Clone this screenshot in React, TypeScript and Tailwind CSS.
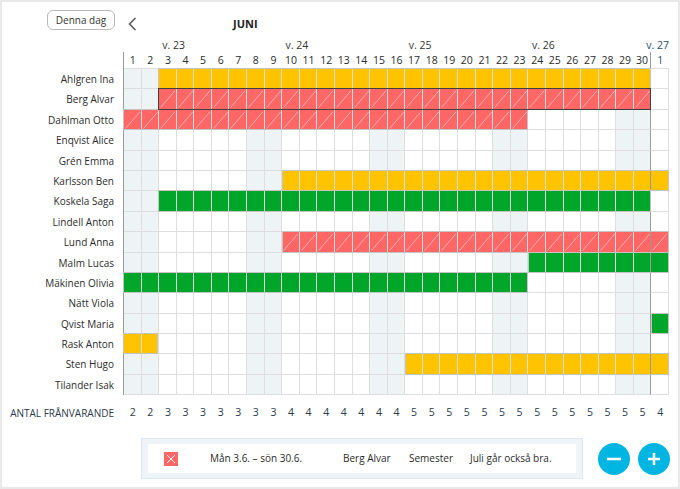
import clsx from "clsx";

type Kind = "yellow" | "red" | "green";

type Bar = {
  from: number;
  to: number;
  kind: Kind;
  selected?: boolean;
};

type Person = {
  name: string;
  bar?: Bar;
};

const COLS = 31;
const COL_W = 546 / COLS;

const days = [...Array.from({ length: 30 }, (_, i) => i + 1), 1];
const weekend = new Set([0, 1, 7, 8, 14, 15, 21, 22, 28, 29]);

const weeks = [
  { label: "v. 23", col: 2 },
  { label: "v. 24", col: 9 },
  { label: "v. 25", col: 16 },
  { label: "v. 26", col: 23 },
];

const people: Person[] = [
  { name: "Ahlgren Ina", bar: { from: 2, to: 29, kind: "yellow" } },
  { name: "Berg Alvar", bar: { from: 2, to: 29, kind: "red", selected: true } },
  { name: "Dahlman Otto", bar: { from: 0, to: 22, kind: "red" } },
  { name: "Enqvist Alice" },
  { name: "Grén Emma" },
  { name: "Karlsson Ben", bar: { from: 9, to: 30, kind: "yellow" } },
  { name: "Koskela Saga", bar: { from: 2, to: 29, kind: "green" } },
  { name: "Lindell Anton" },
  { name: "Lund Anna", bar: { from: 9, to: 30, kind: "red" } },
  { name: "Malm Lucas", bar: { from: 23, to: 30, kind: "green" } },
  { name: "Mäkinen Olivia", bar: { from: 0, to: 22, kind: "green" } },
  { name: "Nätt Viola" },
  { name: "Qvist Maria", bar: { from: 30, to: 30, kind: "green" } },
  { name: "Rask Anton", bar: { from: 0, to: 1, kind: "yellow" } },
  { name: "Sten Hugo", bar: { from: 16, to: 30, kind: "yellow" } },
  { name: "Tilander Isak" },
];

const counts = [
  2, 2, 3, 3, 3, 3, 3, 3, 3, 4, 4, 4, 4, 4, 4, 4, 5, 5, 5, 5, 5, 5, 5, 5, 5, 5, 5, 5, 5, 5, 4,
];

const fill: Record<Kind, string> = {
  yellow: "bg-[#ffc300]",
  red: "bg-[#ff6666]",
  green: "bg-[#00a629]",
};

function Row({ person }: { person: Person }) {
  const bar = person.bar;
  return (
    <div className="flex h-[20.4px]">
      <div className="w-[121px] shrink-0 whitespace-nowrap pr-[9px] text-right leading-[20px] text-[#2b2b2b]">
        {person.name}
      </div>
      <div className="relative grid w-[546px] grid-cols-[repeat(31,minmax(0,1fr))] border-l border-[#9a9a9a]">
        {days.map((_, i) => {
          const inBar = bar && i >= bar.from && i <= bar.to;
          return (
            <div
              key={i}
              className={clsx(
                "relative border-r border-b border-[#dedede]",
                i === 29 && "border-r-[#9a9a9a]",
                weekend.has(i) ? "bg-[#eef4f6]" : "bg-white",
              )}
            >
              {inBar && (
                <div className={clsx("absolute inset-0", fill[bar.kind])}>
                  {bar.kind === "red" && (
                    <svg
                      className="absolute inset-0 h-full w-full"
                      viewBox="0 0 10 10"
                      preserveAspectRatio="none"
                    >
                      <line
                        x1="1"
                        y1="9.5"
                        x2="9.5"
                        y2="1"
                        stroke="#ffd0d0"
                        strokeWidth="0.7"
                        vectorEffect="non-scaling-stroke"
                      />
                    </svg>
                  )}
                </div>
              )}
            </div>
          );
        })}
        {bar && (
          <div
            className={clsx(
              "pointer-events-none absolute top-[-1px] bottom-0 border",
              bar.selected ? "z-10 border-[#3f3f3f]" : "border-[#c4c4c4]",
            )}
            style={{
              left: bar.from * COL_W - 1,
              width: (bar.to - bar.from + 1) * COL_W,
            }}
          />
        )}
      </div>
    </div>
  );
}

export default function App() {
  return (
    <div
      className="h-[489px] w-[680px] overflow-hidden border-2 border-[#e8e8e8] bg-white text-[10px] text-[#2b2b2b]"
      style={{ fontFamily: '"Open Sans", "Noto Sans", sans-serif' }}
    >
      {/* header */}
      <div className="flex h-[36px] items-start pt-[8px]">
        <button className="ml-[45px] h-[20px] w-[68px] rounded-[6px] border border-[#b9b9b9] bg-white text-[10px] leading-[18px] text-[#333]">
          Denna dag
        </button>
        <svg className="ml-[13px] mt-[7px]" width="9" height="14" viewBox="0 0 9 14">
          <polyline
            points="7.5,1 1.5,7 7.5,13"
            fill="none"
            stroke="#555"
            strokeWidth="1.5"
          />
        </svg>
        <span className="ml-[96px] mt-[8px] text-[11px] font-bold leading-[12px] text-[#222]">
          JUNI
        </span>
      </div>

      {/* week labels */}
      <div className="flex h-[14px]">
        <div className="w-[121px] shrink-0" />
        <div className="grid w-[546px] grid-cols-[repeat(31,minmax(0,1fr))] text-[10.5px] leading-[14px] text-[#333]">
          {weeks.map((w) => (
            <div
              key={w.label}
              className="whitespace-nowrap pl-[4px]"
              style={{ gridColumnStart: w.col + 1, gridRowStart: 1 }}
            >
              {w.label}
            </div>
          ))}
          <div
            className="flex justify-end whitespace-nowrap text-[#2a4f6e]"
            style={{ gridColumnStart: 31, gridRowStart: 1 }}
          >
            <span className="-ml-[10px]">v. 27</span>
          </div>
        </div>
      </div>

      {/* day numbers */}
      <div className="flex h-[16px]">
        <div className="w-[121px] shrink-0" />
        <div className="grid w-[546px] grid-cols-[repeat(31,minmax(0,1fr))] border-l border-[#9a9a9a] text-[10.5px] leading-[16px]">
          {days.map((d, i) => (
            <div
              key={i}
              className={clsx(
                "text-center",
                i === 29 && "border-r border-[#9a9a9a]",
                i === 30 && "text-[#2a4f6e]",
              )}
            >
              {d}
            </div>
          ))}
        </div>
      </div>

      {/* body */}
      <div className="flex h-[1px]">
        <div className="w-[121px] shrink-0" />
        <div className="grid w-[546px] grid-cols-[repeat(31,minmax(0,1fr))] border-l border-[#9a9a9a]">
          {days.map((_, i) => (
            <div
              key={i}
              className={clsx(
                "border-b border-[#dedede]",
                i === 29 && "border-r border-r-[#9a9a9a]",
              )}
            />
          ))}
        </div>
      </div>
      {people.map((p) => (
        <Row key={p.name} person={p} />
      ))}

      {/* counts */}
      <div className="mt-[8px] flex h-[20px] items-center">
        <div className="w-[121px] shrink-0 whitespace-nowrap pr-[9px] text-right text-[#2b3a4a]">
          ANTAL FRÅNVARANDE
        </div>
        <div className="grid w-[546px] grid-cols-[repeat(31,minmax(0,1fr))] pl-px text-[10.5px] text-[#2b3a4a]">
          {counts.map((c, i) => (
            <div key={i} className="text-center">
              {c}
            </div>
          ))}
        </div>
      </div>

      {/* footer */}
      <div className="mt-[15px] flex items-center">
        <div className="ml-[139px] h-[41px] w-[442px] border border-[#dde9ef] bg-[#eef4f7] px-[6px] py-[5px]">
          <div className="flex h-full items-center bg-white text-[#2b2b2b]">
            <span className="ml-[16px] flex h-[14px] w-[14px] items-center justify-center bg-[#ff6666]">
              <svg width="10" height="10" viewBox="0 0 10 10">
                <path d="M1 1 L9 9 M9 1 L1 9" stroke="#fff" strokeWidth="1" />
              </svg>
            </span>
            <span className="ml-[32px] w-[133px] whitespace-nowrap">Mån 3.6. – sön 30.6.</span>
            <span className="w-[66px] whitespace-nowrap">Berg Alvar</span>
            <span className="w-[61px] whitespace-nowrap">Semester</span>
            <span className="whitespace-nowrap">Juli går också bra.</span>
          </div>
        </div>
        <button className="ml-[15px] flex h-[32px] w-[32px] items-center justify-center rounded-full bg-[#00b5e2]">
          <svg width="16" height="16" viewBox="0 0 16 16">
            <path d="M1 8 H15" stroke="#fff" strokeWidth="2.5" />
          </svg>
        </button>
        <button className="ml-[8px] flex h-[32px] w-[32px] items-center justify-center rounded-full bg-[#00b5e2]">
          <svg width="16" height="16" viewBox="0 0 16 16">
            <path d="M2 8 H14 M8 2 V14" stroke="#fff" strokeWidth="2.5" />
          </svg>
        </button>
      </div>
    </div>
  );
}
